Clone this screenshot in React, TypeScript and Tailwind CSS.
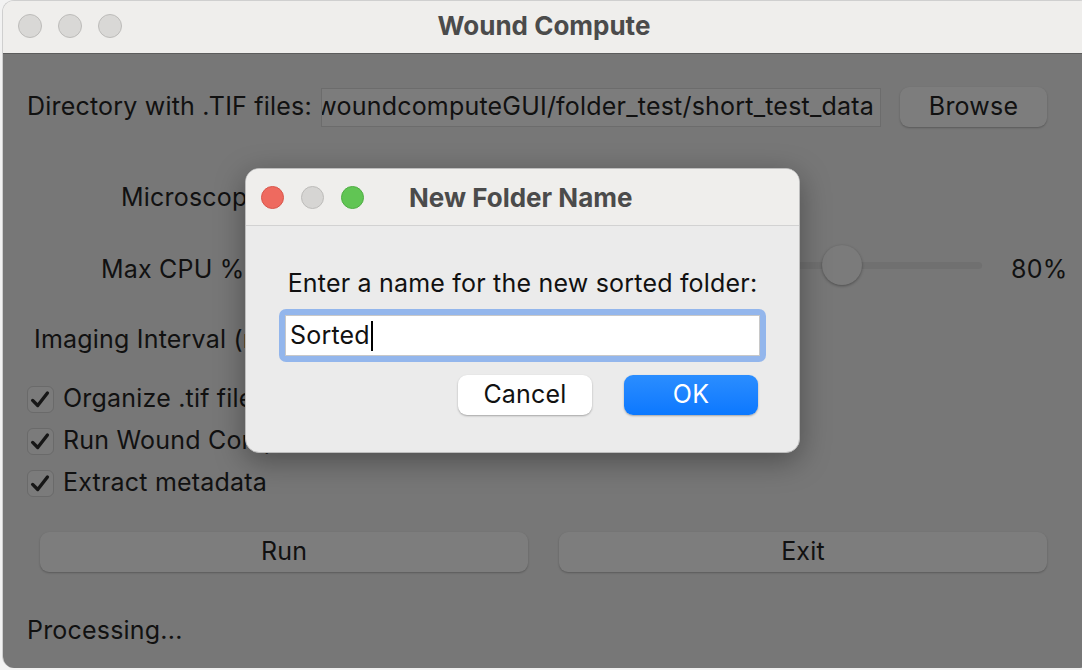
const font = { fontFamily: 'Inter, "Noto Sans", sans-serif' }

function Lights({ colored, size, gap }: { colored?: boolean; size: number; gap: number }) {
  const fills = colored
    ? ['bg-[#ee6a5f] border-[#d9564b]', 'bg-[#d6d5d3] border-[#bdbcba]', 'bg-[#61c554] border-[#4fae43]']
    : ['bg-[#d9d8d6] border-[#bdbcba]', 'bg-[#d9d8d6] border-[#bdbcba]', 'bg-[#d9d8d6] border-[#bdbcba]']
  return (
    <div className="flex" style={{ gap }}>
      {fills.map((c, i) => (
        <div
          key={i}
          className={`rounded-full border ${c}`}
          style={{ width: size, height: size }}
        />
      ))}
    </div>
  )
}

function CheckRow({ label }: { label: string }) {
  return (
    <div className="h-[42px] flex items-center pl-[24px] gap-[9px]">
      <div className="w-[27px] h-[27px] rounded-[6px] bg-[#7b7b7b] border border-[#6a6a6a]">
        <svg viewBox="0 0 27 27" className="w-[25px] h-[25px]">
          <path d="M5 14.5 L10.5 20 L21 6.5" fill="none" stroke="#161616" strokeWidth={3.6} strokeLinecap="round" strokeLinejoin="round" />
        </svg>
      </div>
      <span className="text-[#111]">{label}</span>
    </div>
  )
}

export default function App() {
  return (
    <div className="w-[1082px] h-[670px] bg-[#f2f2f2] relative overflow-hidden tracking-[0.2px]" style={font}>
      <div className="ml-[2px] w-[1090px] h-[668px] rounded-[12px] overflow-hidden flex flex-col border-l border-t border-[#cfcfcf]">
        {/* title bar */}
        <div className="h-[53px] shrink-0 bg-[#efeeec] border-b border-[#5c5c5c] flex items-center relative pb-[3px]">
          <div className="pl-[15px]">
            <Lights size={24} gap={16} />
          </div>
          <div className="absolute left-0 w-[1082px] text-center text-[26px] font-bold text-[#4b4b4b] leading-[30px] top-[10px] tracking-normal">
            Wound Compute
          </div>
        </div>

        {/* body */}
        <div className="flex-1 bg-[#777777] flex flex-col text-[#111] text-[25px]">
          <div className="h-[33px] shrink-0" />
          <div className="h-[40px] flex items-center">
            <span className="pl-[24px] w-[318px] shrink-0 whitespace-nowrap">Directory with .TIF files:</span>
            <div className="w-[560px] h-[39px] bg-[#7c7c7c] border border-[#6c6c6c] overflow-hidden flex items-center justify-end pr-[6px]">
              <span className="whitespace-nowrap">woundcomputeGUI/folder_test/short_test_data</span>
            </div>
            <div className="ml-[19px] w-[147px] h-[40px] rounded-[9px] bg-[#7d7d7d] shadow-[0_1px_2px_rgba(0,0,0,0.25)] flex items-center justify-center">
              Browse
            </div>
          </div>

          <div className="h-[51px] shrink-0" />
          <div className="h-[40px] flex items-center pl-[118px]">
            <span>Microscope type:</span>
          </div>

          <div className="h-[32px] shrink-0" />
          <div className="h-[40px] flex items-center">
            <span className="pl-[98px] w-[397px] shrink-0 whitespace-nowrap">Max CPU %:</span>
            <div className="w-[582px] relative h-[40px] flex items-center mt-[-10px]">
              <div className="w-full h-[7px] rounded-full bg-[#707070]" />
              <div className="absolute left-[422px] top-0 w-[40px] h-[40px] rounded-full bg-[#7b7b7b] shadow-[0_1px_3px_rgba(0,0,0,0.35)]" />
            </div>
            <span className="ml-[29px]">80%</span>
          </div>

          <div className="h-[30px] shrink-0" />
          <div className="h-[40px] flex items-center pl-[31px]">
            <span>Imaging Interval (min):</span>
          </div>

          <div className="h-[18px] shrink-0" />
          <CheckRow label="Organize .tif files" />
          <CheckRow label="Run Wound Compute" />
          <CheckRow label="Extract metadata" />

          <div className="h-[28px] shrink-0" />
          <div className="flex pl-[37px] gap-[31px]">
            <div className="w-[488px] h-[40px] rounded-[9px] bg-[#7d7d7d] shadow-[0_1px_2px_rgba(0,0,0,0.25)] flex items-center justify-center">
              Run
            </div>
            <div className="w-[488px] h-[40px] rounded-[9px] bg-[#7d7d7d] shadow-[0_1px_2px_rgba(0,0,0,0.25)] flex items-center justify-center">
              Exit
            </div>
          </div>

          <div className="h-[39px] shrink-0" />
          <div className="h-[40px] flex items-center pl-[24px]">Processing...</div>
        </div>
      </div>

      {/* dialog */}
      <div className="absolute left-[245px] top-[168px] w-[555px] h-[285px] rounded-[14px] overflow-hidden bg-[#ebebeb] shadow-[0_8px_30px_rgba(0,0,0,0.35)] border border-[#bdbdbd] flex flex-col text-[25px]">
        <div className="h-[57px] shrink-0 bg-[#efeeec] border-b border-[#d2d2d2] flex items-center relative">
          <div className="pl-[15px]">
            <Lights colored size={23} gap={17} />
          </div>
          <div className="absolute left-[163px] text-[26px] font-bold text-[#4b4b4b] tracking-normal">New Folder Name</div>
        </div>
        <div className="flex flex-col items-center pt-[40px]">
          <div className="text-[#111] leading-[34px]">Enter a name for the new sorted folder:</div>
          <div className="mt-[9px] w-[487px] h-[53px] shrink-0 rounded-[7px] bg-[#93b6ec] p-[6px]">
            <div className="w-full h-full bg-white border border-[#c8c8c8] flex items-center pl-[4px] text-[#111]">
              Sorted<span className="w-[2px] h-[30px] bg-black ml-[1px]" />
            </div>
          </div>
          <div className="mt-[13px] w-full flex justify-end pr-[41px] gap-[32px]">
            <div className="w-[134px] h-[40px] rounded-[9px] bg-white shadow-[0_1px_2px_rgba(0,0,0,0.3)] flex items-center justify-center text-[#111]">
              Cancel
            </div>
            <div className="w-[134px] h-[40px] rounded-[9px] bg-gradient-to-b from-[#2a8dff] to-[#0a78ff] shadow-[0_1px_2px_rgba(0,0,0,0.3)] flex items-center justify-center text-white">
              OK
            </div>
          </div>
        </div>
      </div>
    </div>
  )
}
